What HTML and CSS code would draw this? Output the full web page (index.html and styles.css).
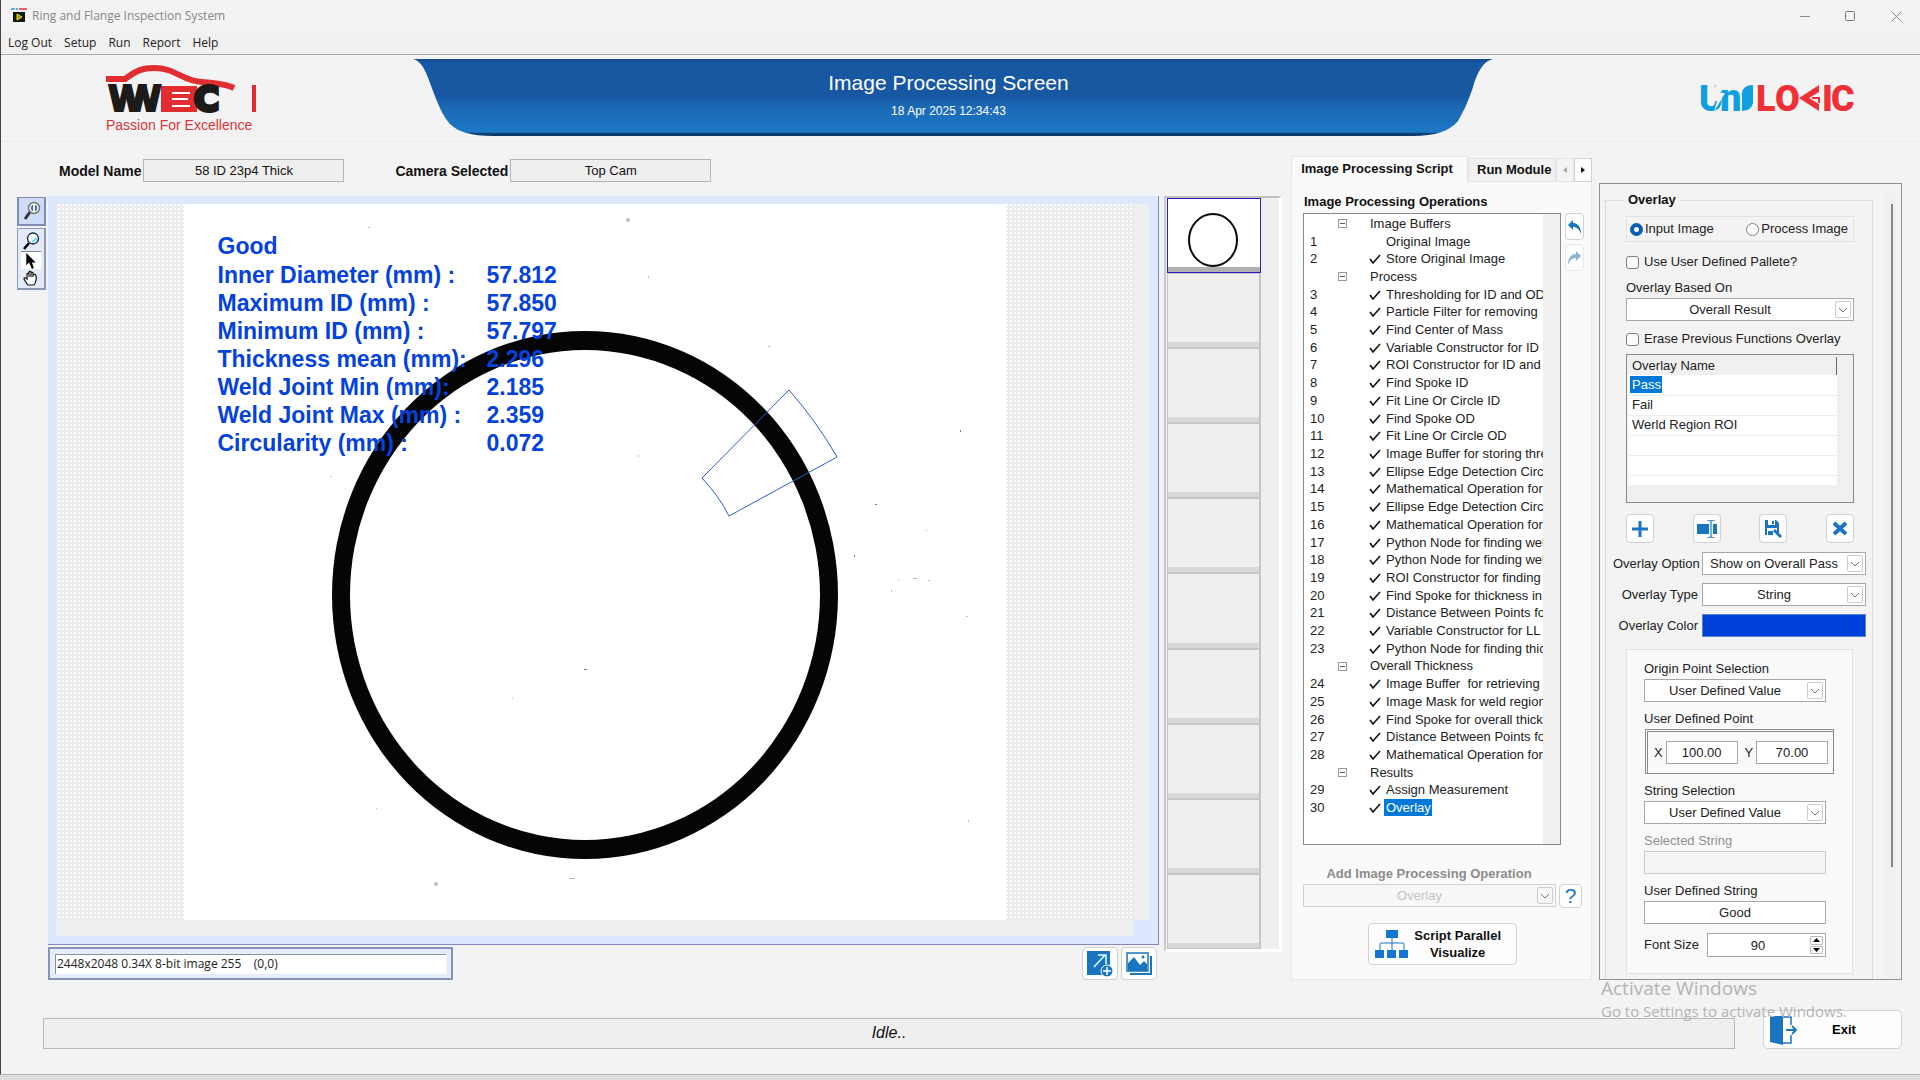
FILE: index.html
```html
<!DOCTYPE html>
<html lang="en">
<head>
<meta charset="utf-8">
<title>Ring and Flange Inspection System</title>
<link rel="stylesheet" href="styles.css">
</head>
<body>
<svg class="defs" aria-hidden="true">
  <symbol id="chevron" viewBox="0 0 10 6"><path d="M1 1l4 4 4-4" fill="none" stroke="#777" stroke-width="1"/></symbol>
  <symbol id="check" viewBox="0 0 12 10"><path d="M1 5l3 4L11 1" fill="none" stroke="#111" stroke-width="1.6"/></symbol>
</svg>
<div class="app">
  <header class="titlebar">
    <svg class="app-icon" width="16" height="16" viewBox="0 0 16 16"><path d="M0 1h4M5 1h2M8 1h8" stroke="#5aaede" stroke-width="2"/><path d="M8 1h8" stroke="#f0606a" stroke-width="2"/><rect x="2" y="4" width="12" height="10" fill="#101808"/><path d="M6 6l5 3-5 3z" fill="#8a9a10" stroke="#f4e020"/></svg>
    <h1>Ring and Flange Inspection System</h1>
    <div class="window-buttons">
      <button aria-label="Minimize"><svg width="10" height="10"><path d="M0 5.500h10" stroke="#888"/></svg></button>
      <button aria-label="Maximize"><svg width="11" height="11"><rect x=".5" y=".5" width="9" height="9" rx="1" fill="none" stroke="#777"/></svg></button>
      <button aria-label="Close"><svg width="11" height="11"><path d="M.5.5l10 10M10.500.5l-10 10" stroke="#888"/></svg></button>
    </div>
  </header>
  <nav class="menu">
    <a href="#">Log Out</a><a href="#">Setup</a><a href="#">Run</a><a href="#">Report</a><a href="#">Help</a>
  </nav>

  <div class="masthead">
    <div class="brand">
      <svg width="154" height="48" viewBox="0 0 154 48" role="img" aria-label="WEC">
        <path d="M0 14h19c12-9 18-11 29-11 22 0 28 13 48 14 14 1 24 2 32 6" fill="none" stroke="#e12d30" stroke-width="6"/>
        <rect x="55" y="21" width="36" height="26" fill="#e12d30"/>
        <g font-family="DejaVu Sans" font-weight="700" font-size="34" stroke-width="3">
          <text x="2" y="46" fill="#1d1b1a" stroke="#1d1b1a" stroke-width="2" font-size="35">W</text>
          <text x="17" y="46" fill="#1d1b1a" stroke="#1d1b1a" stroke-width="2" font-size="35" aria-hidden="true">W</text>
          <text x="88" y="46" fill="#1d1b1a" stroke="#1d1b1a" stroke-width="4">C</text>
        </g>
        <path d="M66 28h18M66 34h16M66 41h18" stroke="#fff" stroke-width="2"/>
        <rect x="146" y="20" width="4" height="27" fill="#e12d30"/>
      </svg>
      <p>Passion For Excellence</p>
    </div>
    <div class="banner">
      <svg viewBox="0 0 1080 78" preserveAspectRatio="none" aria-hidden="true">
        <defs><linearGradient id="blue" x1="0" y1="0" x2="0" y2="1"><stop offset="0" stop-color="#164c8c"/><stop offset=".05" stop-color="#1858a2"/><stop offset=".48" stop-color="#1858a2"/><stop offset=".64" stop-color="#1b6ab6"/><stop offset=".95" stop-color="#1c78c6"/><stop offset=".97" stop-color="#0d3c6c"/><stop offset="1" stop-color="#0d3c6c"/></linearGradient></defs>
        <path fill="url(#blue)" d="M0 0C10 2 15 18 20 32C26 48 30 57 37 65C45 73 58 77 80 77H1000C1022 77 1037 72 1045 62C1052 50 1056 40 1060 28C1064 14 1070 2 1080 0Z"/>
      </svg>
      <div class="banner-text"><h2>Image Processing Screen</h2><time>18 Apr 2025 12:34:43</time></div>
    </div>
    <svg class="unilogic" width="154" height="30" viewBox="0 0 154 30" role="img" aria-label="Unilogic">
      <g font-family="Roboto" font-weight="900" font-size="36" fill="#0f9fe0">
        <text x="-1" y="27">U</text><text x="20" y="27" font-size="38">n</text>
        <path d="M42 27V9q1-8 11-8v18q-1 7-11 8z"/>
        <path d="M16 0h9l-5 9h5L14 28l3-11h-5z" fill="#f3f3f3"/>
        <g fill="#ee3037">
          <text x="56" y="27">L</text><text x="75" y="27">O</text><text x="122" y="27">I</text><text x="131" y="27">C</text>
          <path d="M99 14L119 1v7l-10 6 10 6v7z"/><path d="M112 14h7v5" fill="none" stroke="#ee3037" stroke-width="2"/>
        </g>
      </g>
    </svg>
  </div>

  <main>
    <section class="left">
      <div class="params">
        <label for="model">Model Name</label><input id="model" value="58 ID 23p4 Thick" readonly>
        <label class="second" for="camera">Camera Selected</label><input id="camera" value="Top Cam" readonly>
      </div>
      <div class="workspace">
        <div class="tools">
          <button class="tool-zoom" aria-label="Zoom to fit"><svg width="18" height="20" viewBox="0 0 18 20"><path d="M7 11l-5 7" stroke="#333" stroke-width="3"/><circle cx="11" cy="7" r="5.500" fill="#eee" stroke="#777" stroke-width="1.500"/><path d="M9 5v4M13 5v4M9 5h1M9 9h1M12 5h1M12 9h1" stroke="#258" stroke-width="1.500"/></svg></button>
          <div class="tool-group">
            <button aria-label="Zoom"><svg width="18" height="18" viewBox="0 0 18 18"><path d="M7 11l-5 6" stroke="#000" stroke-width="2.500"/><circle cx="11" cy="6.500" r="5.500" fill="#f4fcff" stroke="#124" stroke-width="1.300"/><path d="M10 10l5-4" stroke="#6de" stroke-width="2"/></svg></button>
            <button class="on" aria-label="Pointer"><svg width="12" height="16" viewBox="0 0 12 17"><path d="M1 0v13l3-3 3 7 2-1-2-6h4z"/></svg></button>
            <button aria-label="Pan"><svg width="16" height="16" viewBox="0 0 16 16"><path d="M4 14L1 9c0-2 2-1 3 0V4c0-1 2-1 2 0v3V2c0-1 2-1 2 0v5-4c0-1 2-1 2 0v4-2c0-1 3-1 3 1 1 4 0 6-2 9H5z" fill="#fff" stroke="#111" stroke-width="1.200"/></svg></button>
          </div>
        </div>
        <div class="viewer-col">
          <div class="viewer">
            <div class="stage">
              <div class="canvas">
                <svg width="822" height="716" viewBox="0 0 822 716" preserveAspectRatio="xMidYMid slice" role="img" aria-label="Camera image of the ring">
                  <ellipse cx="401" cy="391" rx="253" ry="264" fill="#050505"/>
                  <ellipse cx="401" cy="391" rx="235" ry="245" fill="#fff"/>
                  <path d="M605 186Q633 218 653 253L545 312Q535 292 518 274Z" fill="none" stroke="#2d5cd0"/>
                  <g fill="#bbb"><circle cx="444" cy="16" r="2"/><circle cx="252" cy="680" r="2"/><rect x="184" y="23" width="2" height="1"/><rect x="464" y="72" width="1" height="2"/><rect x="584" y="142" width="2" height="1"/><rect x="776" y="226" width="1" height="2" fill="#777"/><rect x="691" y="300" width="2" height="1" fill="#777"/><rect x="742" y="326" width="1" height="1"/><rect x="670" y="351" width="1" height="2" fill="#777"/><rect x="714" y="375" width="1" height="1"/><rect x="729" y="374" width="4" height="1"/><rect x="744" y="376" width="2" height="1"/><rect x="707" y="386" width="1" height="2"/><rect x="400" y="465" width="3" height="1" fill="#777"/><rect x="454" y="251" width="1" height="2"/><rect x="146" y="272" width="2" height="1"/><rect x="328" y="494" width="1" height="1"/><rect x="192" y="604" width="1" height="1"/><rect x="782" y="412" width="2" height="1"/><rect x="784" y="616" width="1" height="2"/><rect x="385" y="674" width="6" height="1"/></g>
                </svg>
                <table class="readings">
                  <tr class="verdict"><th colspan="2">Good</th></tr>
                  <tr><th>Inner Diameter (mm) :</th><td>57.812</td></tr>
                  <tr><th>Maximum ID (mm) :</th><td>57.850</td></tr>
                  <tr><th>Minimum ID (mm) :</th><td>57.797</td></tr>
                  <tr><th>Thickness mean (mm):</th><td>2.296</td></tr>
                  <tr><th>Weld Joint Min (mm):</th><td>2.185</td></tr>
                  <tr><th>Weld Joint Max (mm) :</th><td>2.359</td></tr>
                  <tr><th>Circularity (mm) :</th><td>0.072</td></tr>
                </table>
              </div>
            </div>
            <div class="track"></div>
            <div class="track"></div>
          </div>
          <div class="viewer-foot">
            <div class="info"><output>2448x2048 0.34X 8-bit image 255    (0,0)</output></div>
            <div class="foot-buttons">
              <button aria-label="Expand view"><svg width="26" height="26" viewBox="0 0 26 26"><rect width="23" height="24" fill="#1a74c0"/><path d="M7 16L18 4M11 4h8v9" fill="none" stroke="#dff" stroke-width="1.500"/><circle cx="20" cy="20" r="6" fill="#1a74c0" stroke="#fff"/><path d="M20 16v8M16 20h8" stroke="#fff" stroke-width="1.500"/></svg></button>
              <button aria-label="Image gallery"><svg width="26" height="24" viewBox="0 0 26 24"><path d="M4 22h21V4" fill="none" stroke="#1a74c0" stroke-width="2"/><rect x="1" y="1" width="21" height="18" fill="#fff" stroke="#1a74c0" stroke-width="1.500"/><path d="M2 11l6-6 6 8 4-4 3 3v7H2z" fill="#1a74c0"/><circle cx="17" cy="5" r="1.500" fill="#1a74c0"/></svg></button>
            </div>
          </div>
        </div>
        <div class="strip">
          <div class="thumb current"><svg width="52" height="58" viewBox="0 0 52 58" aria-label="Buffer 1"><ellipse cx="25" cy="28" rx="24" ry="26" fill="none" stroke="#0a0a0a" stroke-width="2"/></svg></div>
          <div class="thumb"></div><div class="thumb"></div><div class="thumb"></div><div class="thumb"></div><div class="thumb"></div><div class="thumb"></div><div class="thumb"></div><div class="thumb"></div><div class="thumb"></div>
        </div>
      </div>
    </section>

    <section class="script">
      <div class="tabs">
        <button class="tab active">Image Processing Script</button>
        <button class="tab">Run Module</button>
        <button class="arrow off" aria-label="Previous tab"><svg width="4" height="6"><path d="M4 0v6L0 3z" fill="#aaa"/></svg></button>
        <button class="arrow" aria-label="Next tab"><svg width="4" height="6"><path d="M0 0v6l4-3z" fill="#111"/></svg></button>
      </div>
      <div class="script-body">
        <h3>Image Processing Operations</h3>
        <div class="tree-row">
          <div class="tree">
            <ul>
              <li class="group"><i></i><b>Image Buffers</b></li>
              <li><span>1</span><em>Original Image</em></li>
              <li><span>2</span><svg><use href="#check"/></svg><em>Store Original Image</em></li>
              <li class="group"><i></i><b>Process</b></li>
              <li><span>3</span><svg><use href="#check"/></svg><em>Thresholding for ID and OD</em></li>
              <li><span>4</span><svg><use href="#check"/></svg><em>Particle Filter for removing</em></li>
              <li><span>5</span><svg><use href="#check"/></svg><em>Find Center of Mass</em></li>
              <li><span>6</span><svg><use href="#check"/></svg><em>Variable Constructor for ID</em></li>
              <li><span>7</span><svg><use href="#check"/></svg><em>ROI Constructor for ID and</em></li>
              <li><span>8</span><svg><use href="#check"/></svg><em>Find Spoke ID</em></li>
              <li><span>9</span><svg><use href="#check"/></svg><em>Fit Line Or Circle ID</em></li>
              <li><span>10</span><svg><use href="#check"/></svg><em>Find Spoke OD</em></li>
              <li><span>11</span><svg><use href="#check"/></svg><em>Fit Line Or Circle OD</em></li>
              <li><span>12</span><svg><use href="#check"/></svg><em>Image Buffer for storing thre</em></li>
              <li><span>13</span><svg><use href="#check"/></svg><em>Ellipse Edge Detection Circ</em></li>
              <li><span>14</span><svg><use href="#check"/></svg><em>Mathematical Operation for</em></li>
              <li><span>15</span><svg><use href="#check"/></svg><em>Ellipse Edge Detection Circ</em></li>
              <li><span>16</span><svg><use href="#check"/></svg><em>Mathematical Operation for</em></li>
              <li><span>17</span><svg><use href="#check"/></svg><em>Python Node for finding wel</em></li>
              <li><span>18</span><svg><use href="#check"/></svg><em>Python Node for finding wel</em></li>
              <li><span>19</span><svg><use href="#check"/></svg><em>ROI Constructor for finding</em></li>
              <li><span>20</span><svg><use href="#check"/></svg><em>Find Spoke for thickness in</em></li>
              <li><span>21</span><svg><use href="#check"/></svg><em>Distance Between Points fo</em></li>
              <li><span>22</span><svg><use href="#check"/></svg><em>Variable Constructor for LL</em></li>
              <li><span>23</span><svg><use href="#check"/></svg><em>Python Node for finding thic</em></li>
              <li class="group"><i></i><b>Overall Thickness</b></li>
              <li><span>24</span><svg><use href="#check"/></svg><em>Image Buffer  for retrieving t</em></li>
              <li><span>25</span><svg><use href="#check"/></svg><em>Image Mask for weld region</em></li>
              <li><span>26</span><svg><use href="#check"/></svg><em>Find Spoke for overall thick</em></li>
              <li><span>27</span><svg><use href="#check"/></svg><em>Distance Between Points fo</em></li>
              <li><span>28</span><svg><use href="#check"/></svg><em>Mathematical Operation for</em></li>
              <li class="group"><i></i><b>Results</b></li>
              <li><span>29</span><svg><use href="#check"/></svg><em>Assign Measurement</em></li>
              <li><span>30</span><svg><use href="#check"/></svg><em><mark>Overlay</mark></em></li>
            </ul>
          </div>
          <div class="history">
            <button aria-label="Undo"><svg width="13" height="14" viewBox="0 0 13 14"><path d="M5 0L0 5l5 5V7c4 0 6 2 8 7 0-7-3-11-8-11z" fill="#1a74c0"/></svg></button>
            <button aria-label="Redo" disabled><svg width="13" height="14" viewBox="0 0 13 14"><path d="M8 0l5 5-5 5V7c-4 0-6 2-8 7 0-7 3-11 8-11z" fill="#8ab6dc"/></svg></button>
          </div>
        </div>
        <label class="add-label" for="add-op">Add Image Processing Operation</label>
        <div class="add-row">
          <div class="select"><select id="add-op" disabled><option>Overlay</option></select><i><svg><use href="#chevron"/></svg></i></div>
          <button class="help" aria-label="Help">?</button>
        </div>
        <button class="visualize"><svg width="34" height="28" viewBox="0 0 34 28"><g fill="#1276d2"><rect x="11" width="12" height="8"/><rect y="20" width="9" height="8"/><rect x="12" y="20" width="9" height="8"/><rect x="24" y="20" width="9" height="8"/></g><path d="M17 8v12M5 20v-6q0-1 1-1h22q1 0 1 1v6" fill="none" stroke="#1276d2"/></svg><span>Script Parallel<br>Visualize</span></button>
      </div>
    </section>

    <section class="props">
      <fieldset>
        <legend>Overlay</legend>
        <div class="inset">
          <div class="radios">
            <label><input type="radio" name="src" checked>Input Image</label>
            <label><input type="radio" name="src">Process Image</label>
          </div>
          <label class="tick"><input type="checkbox">Use User Defined Pallete?</label>
          <label class="caption" for="based">Overlay Based On</label>
          <div class="select"><select id="based"><option>Overall Result</option></select><i><svg><use href="#chevron"/></svg></i></div>
          <label class="tick"><input type="checkbox">Erase Previous Functions Overlay</label>
          <div class="names">
            <table>
              <thead><tr><th>Overlay Name</th></tr></thead>
              <tbody><tr><td><mark>Pass</mark></td></tr><tr><td>Fail</td></tr><tr><td>Werld Region ROI</td></tr><tr><td></td></tr><tr><td></td></tr><tr class="cut"><td></td></tr></tbody>
            </table>
          </div>
          <div class="actions">
            <button aria-label="Add"><svg width="16" height="16"><path d="M8 0v16M0 8h16" stroke="#1a74c0" stroke-width="3"/></svg></button>
            <button aria-label="Rename"><svg width="20" height="18" viewBox="0 0 20 18"><path d="M0 4h12v10H0zM16 4h4v10h-4z" fill="#1a74c0"/><path d="M10 0q4 0 4 2v14q0 2-4 2M18 0q-4 0-4 2v14q0 2 4 2" fill="none" stroke="#4a92cf" stroke-width="1.500"/></svg></button>
            <button aria-label="Save"><svg width="18" height="19" viewBox="0 0 18 19"><path d="M1 1h11l3 3v12H1z" fill="#1a74c0"/><path d="M4 1h7v5H4zM3 9h10v7H3z" fill="#fff"/><path d="M8 2h2v3H8zM4 12h5v4H4z" fill="#1a74c0"/><path d="M10 11l7 7" stroke="#1a74c0" stroke-width="3"/></svg></button>
            <button aria-label="Delete"><svg width="14" height="15"><path d="M1 2l12 11M13 2L1 13" stroke="#1a74c0" stroke-width="4"/></svg></button>
          </div>
        </div>
        <div class="pairs">
          <label for="opt">Overlay Option</label><div class="select"><select id="opt"><option>Show on Overall Pass</option></select><i><svg><use href="#chevron"/></svg></i></div>
          <label for="type">Overlay Type</label><div class="select"><select id="type"><option>String</option></select><i><svg><use href="#chevron"/></svg></i></div>
          <label for="color">Overlay Color</label><button id="color" class="swatch" aria-label="Overlay Color"></button>
        </div>
        <div class="details">
          <label class="caption" for="origin">Origin Point Selection</label>
          <div class="select"><select id="origin"><option>User Defined Value</option></select><i><svg><use href="#chevron"/></svg></i></div>
          <p class="caption">User Defined Point</p>
          <div class="point"><label for="px">X</label><input id="px" value="100.00"><label for="py">Y</label><input id="py" value="70.00"></div>
          <label class="caption" for="ssel">String Selection</label>
          <div class="select"><select id="ssel"><option>User Defined Value</option></select><i><svg><use href="#chevron"/></svg></i></div>
          <label class="caption dim" for="sstr">Selected String</label>
          <input id="sstr" disabled>
          <label class="caption" for="ustr">User Defined String</label>
          <input id="ustr" value="Good">
          <div class="size-row"><label for="fs">Font Size</label>
            <div class="spin"><input id="fs" value="90"><div><button aria-label="Increase"><svg width="7" height="4"><path d="M0 4h7L3.500 0z"/></svg></button><button aria-label="Decrease"><svg width="7" height="4"><path d="M0 0h7L3.500 4z"/></svg></button></div></div>
          </div>
        </div>
      </fieldset>
      <div class="scroll"><div></div></div>
    </section>
  </main>

  <footer>
    <output class="status">Idle..</output>
    <button class="exit"><svg width="28" height="30" viewBox="0 0 28 30"><path d="M0 1l13 0v29L0 27z" fill="#1a74c0"/><path d="M13 2h8v8M21 20v8h-8" fill="none" stroke="#1a74c0" stroke-width="1.500"/><path d="M16 15h10M22 11l4 4-4 4" fill="none" stroke="#1a74c0" stroke-width="1.800"/></svg><span>Exit</span></button>
    <div class="activate"><p>Activate Windows</p><p>Go to Settings to activate Windows.</p></div>
  </footer>
</div>
</body>
</html>
```
FILE: styles.css
```css
* { box-sizing: border-box; }
body { margin: 0; background: #dedede; color: #222; font: 13px/16px "Liberation Sans", Arial, sans-serif; }
h1, h2, h3, p, ul { margin: 0; padding: 0; font-weight: 400; }
button, input, select { font: inherit; color: inherit; margin: 0; }
button { display: flex; align-items: center; justify-content: center; padding: 0; border: 1px solid #d2d2d2; border-radius: 4px; background: #fdfdfd; }
svg { display: block; flex: none; }
.defs { display: none; }
mark { background: #0078d7; color: #fff; }

.app { display: flex; flex-direction: column; min-height: calc(100vh - 5px); background: #f3f3f3; border-left: 1px solid #444; border-bottom: 1px solid #b8b8b8; }

/* window frame */
.titlebar { display: flex; align-items: center; gap: 5px; height: 32px; padding: 0 18px 0 10px; color: #888; }
.titlebar h1 { flex: 1; font: 12px/16px "Open Sans", "Noto Sans", sans-serif; }
.window-buttons { display: flex; gap: 35px; }
.window-buttons button { border: 0; background: none; }
.menu { display: flex; gap: 12px; height: 23px; padding: 2px 7px 0; border-bottom: 1px solid #a8a8ac; background: #f0f0f0; font: 12px/18px "Open Sans", "Noto Sans", sans-serif; }
.menu a { color: #222; text-decoration: none; }

/* masthead */
.masthead { display: flex; height: 87px; padding-top: 4px; border-bottom: 1px solid #ececec; }
.brand { width: 412px; padding: 6px 0 0 105px; color: #d8363a; font-size: 14px; line-height: 18px; }
.brand p { margin-top: 3px; }
.brand svg, .unilogic { overflow: visible; }
.banner { flex: 1; display: grid; height: 78px; }
.banner > * { grid-area: 1 / 1; }
.banner svg { width: 100%; height: 100%; }
.banner-text { z-index: 1; padding: 12px 9px 0 0; text-align: center; color: #fff; }
.banner h2 { font-size: 21px; line-height: 24px; }
.banner time { display: block; margin-top: 8px; font-size: 12px; line-height: 16px; }
.unilogic { margin: 25px 66px 0 207px; }

/* main layout */
main { display: flex; padding: 14px 18px 0 16px; }
.left { flex: 1; min-width: 0; display: flex; flex-direction: column; margin-right: 9px; }
.params { display: flex; align-items: center; gap: 2px; height: 26px; padding: 3px 0 0 42px; color: #111; }
.params label { font-size: 14px; font-weight: 700; }
.params .second { margin-left: 49px; }
.params input { width: 201px; height: 23px; border: 1px solid #b4b4b4; background: #efefef; text-align: center; }
.workspace { flex: 1; display: flex; min-height: 0; margin-top: 14px; }

.tools { width: 29px; margin: 1px 2px 0 0; }
.tools button { border-radius: 0; border: 0; background: none; }
.tools .tool-zoom { width: 29px; height: 29px; border: 2px solid #7f8db4; border-top-width: 1px; background: #cfdcf8; }
.tool-group { display: grid; grid-template-rows: 20px 18px 17px; padding: 2px 3px; margin-top: 2px; border: 1px solid #8c98b4; border-right-width: 2px; border-bottom-width: 2px; background: #e3ebfa; }
.tools .on { background: #fff; border-top: 1px solid #888; }

.viewer-col { flex: 1; min-width: 0; display: flex; flex-direction: column; margin-right: 5px; }
.viewer { flex: 1; display: grid; grid-template: minmax(0, 1fr) 16px / minmax(0, 1fr) 16px; padding: 8px 9px 8px 8px; border: solid #8488b4; border-width: 0 1px 1px 0; background: #dde8fe; }
.stage { display: flex; justify-content: center; overflow: hidden; background: conic-gradient(#fff 25%, #ececec 0) 0 0 / 4px 4px; }
.canvas { position: relative; flex: none; width: 822px; background: #fff; overflow: hidden; }
.canvas svg { width: 100%; height: 100%; }
.track { background: #efefef; }
.readings { position: absolute; left: 34px; top: 27px; border-collapse: collapse; color: #0442dc; font-size: 23px; line-height: 28px; font-weight: 700; white-space: nowrap; }
.readings tr { height: 28px; }
.readings .verdict { height: 30px; }
.readings th { width: 269px; padding: 0; text-align: left; }
.readings td { padding: 0; }

.viewer-foot { display: flex; justify-content: space-between; height: 35px; padding-top: 2px; }
.info { width: 405px; padding: 5px 5px 4px; border: 2px solid #8593b8; border-style: double solid solid double; background: #e6eefc; }
.info output { display: block; height: 20px; padding-left: 1px; border: 1px solid #8890a0; border-width: 1px 0 0 1px; background: #fff; font: 12px/18px "Open Sans", "Noto Sans", sans-serif; white-space: pre; }
.foot-buttons { display: flex; gap: 3px; margin-right: 2px; }
.foot-buttons button { width: 36px; height: 33px; }

.strip { display: grid; grid-template-rows: repeat(10, 1fr); width: 118px; margin-bottom: 28px; padding-left: 1px; border: solid; border-width: 2px 3px 3px 2px; border-color: #c2c2c2 #fff #fff #c8c8c8; background: #efefef; }
.thumb { width: 94px; border: solid #c6c6c6; border-width: 1px 2px 1px 1px; box-shadow: inset 0 -5px #d8d8d8; }
.thumb.current { display: flex; justify-content: center; padding-top: 13px; border: 1px solid #2a20c0; box-shadow: inset 0 -5px #b0b0b0; background: #fff; }

/* script panel */
.script { width: 301px; margin-right: 7px; display: flex; flex-direction: column; }
.tabs { display: flex; align-items: flex-end; height: 26px; font-weight: 700; color: #111; }
.tab { height: 24px; padding: 0 4px 0 8px; border-color: #e6e6e6; border-radius: 0; background: #f1f1f1; white-space: nowrap; }
.tab.active { width: 177px; height: 26px; padding: 0 13px 2px 8px; background: #fafafa; border-bottom: 0; }
.arrow { flex: 1; height: 24px; border-radius: 0; }
.arrow.off { border-color: #e6e6e6; background: #f4f4f4; }
.script-body { flex: 1; padding: 12px 7px 0 11px; border: 1px solid #e8e8e8; border-top: 0; background: #fafafa; }
.script h3 { padding-left: 1px; font-size: 13px; line-height: 16px; font-weight: 700; color: #111; }
.tree-row { display: flex; gap: 4px; margin-top: 3px; }
.tree { flex: 1; min-width: 0; padding: 1px 17px 27px 0; border: 1px solid #8a8a8a; background: linear-gradient(#f0f0f0, #f0f0f0) right / 17px 100% no-repeat #fff; }
.tree ul { display: grid; grid-template-rows: repeat(34, 1fr); height: 602px; overflow: hidden; list-style: none; }
.tree li { display: grid; grid-template-columns: 28px 31px 17px minmax(0, 1fr); align-items: center; padding-left: 6px; overflow: hidden; white-space: pre; }
.tree li svg { grid-column: 3; width: 12px; height: 10px; }
.tree em { grid-column: 4; font-style: normal; }
.tree b { grid-column: 3 / 5; padding-left: 1px; font-weight: 400; }
.tree i { grid-column: 2; width: 9px; height: 9px; border: 1px solid #999; background: linear-gradient(#558, #558) center / 5px 1px no-repeat #fff; }
.tree mark { padding: 1px 1px 1px 2px; margin-left: -2px; }
.history { display: grid; gap: 4px; align-content: start; }
.history button { width: 19px; height: 27px; }
.history button:disabled { border-color: #e8e8e8; }
.add-label { display: block; margin-top: 21px; padding-right: 29px; text-align: center; font-weight: 700; color: #8c8c8c; }
.add-row { display: flex; gap: 3px; margin: 2px 2px 0 0; }
.add-row .select { flex: 1; border-color: #d2d2d2; background: #f7f7f7; color: #c4c4c4; }
.help { width: 23px; height: 24px; color: #1a74c0; font-size: 21px; }
.visualize { justify-content: flex-end; gap: 5px; width: 149px; height: 42px; margin: 15px 0 0 65px; padding-right: 15px; color: #111; font-weight: 700; line-height: 17px; white-space: nowrap; }

/* shared form parts */
.select { display: grid; grid-template-columns: 1fr 18px; height: 23px; border: 1px solid #a8a8a8; background: #fff; }
.select select { grid-area: 1 / 1 / 2 / 3; width: 100%; height: 100%; padding: 0 20px 0 0; border: 0; background: none; appearance: none; text-align: center; text-align-last: center; opacity: 1; }
.select i { grid-area: 1 / 2; display: flex; align-items: center; justify-content: center; margin: 2px 2px 2px 0; border: 1px solid #ccc; border-radius: 2px; pointer-events: none; }
.select svg { width: 10px; height: 6px; }

/* overlay properties */
.props { display: flex; width: 303px; margin-top: 27px; padding: 8px 1px 0 5px; border: 1px solid #909090; }
fieldset { flex: 1; min-width: 0; margin: 0 12px 0 0; padding: 0 6px 5px 7px; border: 1px solid #dcdcdc; border-bottom: 0; }
legend { margin-left: 11px; padding: 0 4px; font-size: 13px; line-height: 16px; font-weight: 700; color: #111; }
.inset { margin: 8px 12px 0 13px; }
.radios { display: flex; justify-content: space-between; height: 26px; padding: 0 5px 0 3px; border: 1px solid #e2e2e2; }
label input[type] { flex: none; width: 13px; height: 13px; margin: 0; appearance: none; border: 1px solid #808080; background: #fbfbfb; }
.radios label { display: flex; align-items: center; gap: 2px; }
.radios input[type] { border-radius: 50%; }
.radios input:checked { border: 4px solid #0a5fb0; background: #fff; }
.tick { display: flex; align-items: center; gap: 5px; height: 16px; margin: 12px 0 10px; }
.tick input[type] { border-radius: 3px; }
.caption { display: block; margin-bottom: 2px; line-height: 16px; }
.inset .select + .tick { margin: 10px 0 7px; }
.names { height: 149px; padding: 2px 16px 0 1px; border: 1px solid #8a8a8a; background: #f0f0f0; }
.names table { width: 100%; border-collapse: collapse; }
.names th { height: 18px; padding: 0 4px; border-right: 1px solid #666; text-align: left; font-weight: 400; }
.names td { height: 20px; padding: 0 4px; border-bottom: 1px solid #ededed; background: #fff; }
.names .cut td { height: 10px; border: 0; }
.names mark { margin-left: -2px; padding: 1px 1px 1px 2px; }
.actions { display: flex; justify-content: space-between; margin: 11px 0 9px; }
.actions button { width: 28px; height: 29px; }
.pairs { display: grid; grid-template-columns: 85px 1fr; gap: 8px 4px; align-items: center; text-align: right; white-space: nowrap; }
.swatch { height: 23px; border: 1px solid #5a86c8; border-radius: 0; background: #003fd8; }
.details { margin: 12px 13px 0; padding: 11px 26px 16px 17px; border: 1px solid #e2e2e2; background: #f9f9f9; }
.details > .select, .details > input { margin-bottom: 9px; }
.details input { width: 100%; height: 23px; padding: 0; border: 1px solid #a8a8a8; background: #fff; text-align: center; }
.details > input { display: block; }
.details input:disabled { border-color: #ccc; background: #f4f4f4; }
.dim { color: #909090; }
.point { display: flex; align-items: center; gap: 3px; height: 45px; margin: 0 -8px 9px 1px; padding: 0 5px 0 6px; border: solid #8c8c8c; border-width: 3px 1px 1px 3px; border-style: double solid solid double; }
.point input { flex: 1; min-width: 0; }
.point input + label { margin-left: 4px; }
.size-row { display: flex; align-items: center; justify-content: space-between; height: 24px; }
.spin { display: flex; width: 119px; height: 24px; border: 1px solid #a8a8a8; background: #fff; }
.spin input { flex: 1; min-width: 0; height: 100%; border: 0; padding-left: 0; }
.spin div { display: grid; gap: 1px; width: 13px; margin: 2px; }
.spin button { border-radius: 1px; border-color: #bbb; }
.scroll { width: 15px; padding: 12px 6px 0; background: #f0f0f0; }
.scroll div { width: 2px; height: 663px; background: #858585; }

/* footer */
footer { position: relative; display: flex; align-items: flex-end; gap: 28px; padding: 30px 18px 24px 42px; }
.status { flex: 1; height: 31px; border: 1px solid #b8b8b8; background: #efefef; text-align: center; font-size: 16px; line-height: 28px; font-style: italic; color: #111; }
.exit { width: 139px; height: 39px; justify-content: flex-start; padding: 0 17px 0 6px; border-radius: 5px; color: #000; font-weight: 700; }
.exit span { flex: 1; padding-left: 6px; }
.activate { position: absolute; top: -4px; right: 20px; width: 299px; color: #b4b4b4; font: 15px/20px "Open Sans", "Noto Sans", sans-serif; pointer-events: none; white-space: nowrap; }
.activate p:first-child { font-size: 19px; line-height: 25px; }
```
